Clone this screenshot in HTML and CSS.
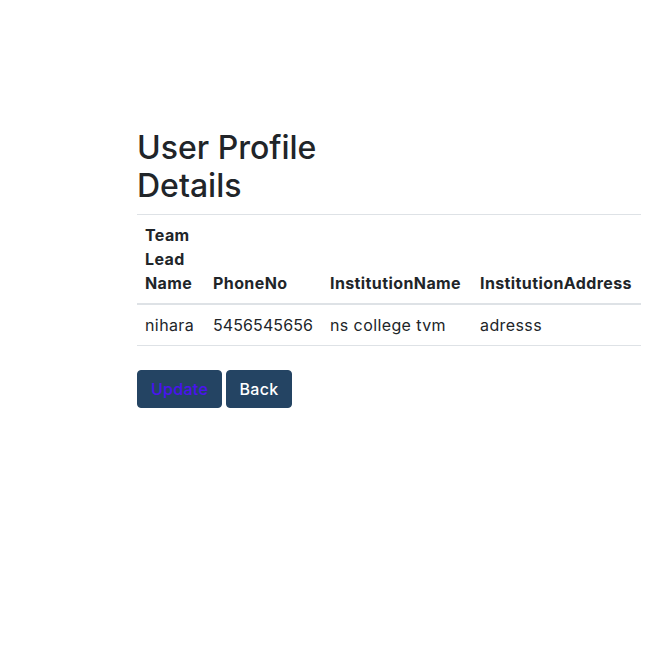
FILE: index.html
```html
<!DOCTYPE html>
<html lang="en">
<head>
<meta charset="utf-8">
<title>User Profile Details</title>
<link rel="stylesheet" href="styles.css">
</head>
<body>
<main class="page">
  <section class="profile">
    <h2 class="title">User Profile Details</h2>
    <table class="table">
      <colgroup>
        <col class="c1"><col class="c2"><col class="c3"><col class="c4">
      </colgroup>
      <thead>
        <tr>
          <th>Team Lead Name</th>
          <th>PhoneNo</th>
          <th>InstitutionName</th>
          <th>InstitutionAddress</th>
        </tr>
      </thead>
      <tbody>
        <tr>
          <td>nihara</td>
          <td class="num">5456545656</td>
          <td>ns college tvm</td>
          <td>adresss</td>
        </tr>
      </tbody>
    </table>
    <div class="actions">
      <button class="btn btn-update">Update</button>
      <button class="btn btn-back">Back</button>
    </div>
  </section>
</main>
</body>
</html>
```
FILE: styles.css
```css
* { box-sizing: border-box; }
html, body { margin: 0; padding: 0; background: #fff; }
body {
  font-family: Inter, "Noto Sans", sans-serif;
  font-size: 16px;
  line-height: 24px;
  color: #212529;
}
.page {
  display: flex;
  padding: 129px 0 0 137px;
}
.profile {
  display: flex;
  flex-direction: column;
  align-items: flex-start;
}
.title {
  width: 240px;
  margin: 0 0 8px 0;
  font-size: 32px;
  font-weight: 500;
  line-height: 38.4px;
}
.table {
  width: 504px;
  table-layout: fixed;
  border-collapse: collapse;
  margin-bottom: 24px;
}
.c1 { width: 68px; }
.c2 { width: 117px; }
.c3 { width: 150px; }
.c4 { width: 169px; }
.table th, .table td {
  padding: 8px;
  text-align: left;
  border-top: 1px solid #dee2e6;
  letter-spacing: 0.4px;
}
.table th { font-weight: 700; vertical-align: bottom; }
.table td { vertical-align: top; }
.table td.num { letter-spacing: 0.1px; }
.table thead th { border-bottom: 2px solid #dee2e6; }
.table tbody tr:last-child td { border-bottom: 1px solid #dee2e6; }
.actions {
  display: flex;
  gap: 4px;
}
.btn {
  font-family: inherit;
  font-size: 16px;
  line-height: 24px;
  padding: 6px 12px;
  border: 1px solid #244463;
  border-radius: 4px;
  background: #244463;
  color: #fff;
  font-weight: 500;
  letter-spacing: 0.3px;
}
.btn-update { color: #4b12f0; width: 85px; }
.btn-back { width: 66px; }
```
